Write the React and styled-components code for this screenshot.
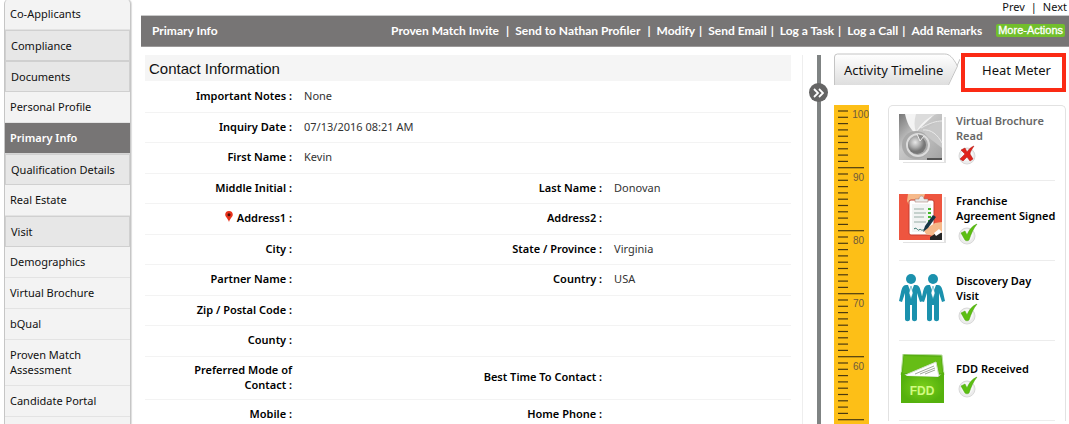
import React, { useState } from "react";
import styled, { createGlobalStyle, css } from "styled-components";

const menu = [
  { name: "Co-Applicants" },
  { name: "Compliance", shaded: true },
  { name: "Documents", shaded: true },
  { name: "Personal Profile" },
  { name: "Primary Info" },
  { name: "Qualification Details", shaded: true },
  { name: "Real Estate" },
  { name: "Visit", shaded: true },
  { name: "Demographics" },
  { name: "Virtual Brochure" },
  { name: "bQual" },
  { name: "Proven Match Assessment" },
  { name: "Candidate Portal" },
];

const actions = [
  { name: "Proven Match Invite", wide: true },
  { name: "Send to Nathan Profiler", wide: true },
  { name: "Modify" },
  { name: "Send Email" },
  { name: "Log a Task" },
  { name: "Log a Call" },
  { name: "Add Remarks" },
];

const rows = [
  [["Important Notes", "None"]],
  [["Inquiry Date", "07/13/2016 08:21 AM"]],
  [["First Name", "Kevin"]],
  [["Middle Initial", ""], ["Last Name", "Donovan"]],
  [["Address1", ""], ["Address2", ""]],
  [["City", ""], ["State / Province", "Virginia"]],
  [["Partner Name", ""], ["Country", "USA"]],
  [["Zip / Postal Code", ""]],
  [["County", ""]],
  [["Preferred Mode of Contact", ""], ["Best Time To Contact", ""]],
  [["Mobile", ""], ["Home Phone", ""]],
];

function PinIcon() {
  return (
    <Pin width="8" height="11" viewBox="0 0 8 11" aria-hidden="true">
      <path d="M4 0a3.8 3.8 0 0 1 3.8 3.8C7.8 6 5 7.5 4 11 3 7.500.2 6 .2 3.800A3.800 3.800 0 0 1 4 0z" fill="#e8331c" />
      <circle cx="4" cy="3.700" r="1.500" fill="#4a0d08" />
    </Pin>
  );
}

function BrochureIcon() {
  return (
    <svg width="48" height="50" viewBox="0 0 48 50" aria-hidden="true">
      <defs>
        <linearGradient id="paper" x1="0" y1="0" x2="1" y2="1">
          <stop offset="0" stopColor="#777" />
          <stop offset="0.4" stopColor="#c9c9c9" />
          <stop offset="1" stopColor="#a2a2a2" />
        </linearGradient>
        <radialGradient id="ball" cx="0.4" cy="0.35">
          <stop offset="0" stopColor="#e8e8e8" />
          <stop offset="0.6" stopColor="#aaa" />
          <stop offset="1" stopColor="#777" />
        </radialGradient>
      </defs>
      <rect x="4" y="3" width="43" height="46" fill="#e2e2e2" />
      <rect width="45" height="48" fill="#fff" />
      <rect width="43" height="46" fill="url(#paper)" />
      <path d="M6 0c2 9 5 15 10 19L36 0z" fill="#f4f4f4" />
      <path d="M17 0c-2 7-2 13 0 18C22 9 29 3 38 0z" fill="#dcdcdc" />
      <path d="M43 6C34 9 27 14 25 20l18 14z" fill="#c8c8c8" />
      <path d="M24 16c8-1 15 5 19 13M22 14c9-5 15-7 21-7" fill="none" stroke="#e9e9e9" />
      <circle cx="17" cy="31" r="14" fill="#a9a9a9" />
      <circle cx="19" cy="31" r="11" fill="none" stroke="#dcdcdc" strokeWidth="2" />
      <circle cx="18" cy="31" r="9" fill="url(#ball)" />
      <path d="M18 20l3 7 4-5" fill="#8b8b8b" stroke="#eee" />
      <path d="M28 44h15v2H28z" fill="#555" />
    </svg>
  );
}

function AgreementIcon() {
  return (
    <svg width="48" height="50" viewBox="0 0 48 50" aria-hidden="true">
      <rect x="4" y="3" width="43" height="46" fill="#e2e2e2" />
      <rect width="45" height="48" fill="#fff" />
      <rect width="43" height="46" fill="#ee553f" />
      <path d="M9 0h17l-2 6-5 2-3 6-5-1-3-6z" fill="#f6b98a" />
      <rect x="10" y="6" width="25" height="35" rx="2" fill="#fff" stroke="#c63c2e" />
      <rect x="13" y="10" width="19" height="28" fill="#f2f4f4" />
      <path d="M16 8V5h4c0-4 5-4 5 0h4v3z" fill="#e9eaea" stroke="#9c6c62" strokeWidth="0.500" />
      <path d="M15 15h10M15 19h12M15 23h10M15 28h12" stroke="#b7c5c0" strokeWidth="1.500" />
      <path d="M29 15h3M29 19h3M29 23h3M29 27h3" stroke="#42b82b" strokeWidth="2" />
      <path d="M15 35c3-3 4 4 6 0 2 2 3 1 5 0" fill="none" stroke="#3c7972" />
      <path d="M43 28l-7 1-8 5-3 3 2 3 7 2 9 4z" fill="#f6b98a" />
      <path d="M24 38l2-6 8-11 3 2-8 11z" fill="#183746" />
      <path d="M31 43l8-5 4 1v7H31z" fill="#262626" />
      <path d="M35 39l5-4 3 3-6 4z" fill="#fff" />
    </svg>
  );
}

function Person({ x }) {
  return (
    <g transform={`translate(${x} 0)`}>
      <circle cx="12" cy="5" r="5" fill="#1b91ad" />
      <path
        d="M7 11h10c3 0 4 3 5 7l2 9-3 1-3-9v26c0 3-5 3-5 0V31h-2v14c0 3-5 3-5 0V19l-3 9-3-1 2-9c1-4 2-7 5-7z"
        fill="#1b91ad"
      />
      <path d="M9 11h6l-3 8z" fill="#fff" />
      <path d="M12 12l2 7-2 6-2-6z" fill="#fff" stroke="#1b91ad" strokeWidth="0.500" />
    </g>
  );
}

function VisitIcon() {
  return (
    <svg width="48" height="50" viewBox="0 0 48 50" aria-hidden="true">
      <Person x={0} />
      <Person x={22} />
    </svg>
  );
}

function FddIcon() {
  return (
    <svg width="48" height="50" viewBox="0 0 48 50" aria-hidden="true">
      <defs>
        <radialGradient id="envelope">
          <stop offset="0" stopColor="#7cd01b" />
          <stop offset="1" stopColor="#55b10d" />
        </radialGradient>
      </defs>
      <path d="M4 0l39 1 2 20H2z" fill="#58ae12" stroke="#b9dca0" />
      <path d="M5 2l37 1 1 16H4z" fill="#66bd16" />
      <path d="M4 22L37 8l3 15z" fill="#fff" stroke="#d6dfd0" />
      <path d="M16 20l19-8M21 20l15-6M26 20l10-4" stroke="#9fa79a" />
      <path d="M2 18l6 4 31 1 6-5v31H2z" fill="url(#envelope)" />
      <text
        x="23"
        y="41"
        textAnchor="middle"
        fontFamily="Liberation Sans, sans-serif"
        fontWeight="bold"
        fontSize="12"
        fill="#d2fa83"
      >
        FDD
      </text>
    </svg>
  );
}

function StatusIcon({ done }) {
  return (
    <Status width="20" height="22" viewBox="0 0 20 22" role="img" aria-label={done ? "Done" : "Not done"}>
      <circle cx="9" cy="13" r="8" fill="#ececec" stroke="#d9d9d9" />
      <circle cx="9" cy="12" r="6" fill="#f7f7f7" />
      {done ? (
        <path d="M3 10l4-2 2 4C11 7 14 3 19 1c-4 5-6 10-8 16-1 1-3 1-4 0z" fill="#5cbf12" stroke="#48a20c" strokeWidth="0.500" />
      ) : (
        <path d="M3 7l4-2 2 4c2-3 4-5 7-6-2 3-4 6-4 8l3 5-3 2-3-4-4 4-3-2 5-5z" fill="#e0231a" stroke="#ad130e" strokeWidth="0.500" />
      )}
    </Status>
  );
}

function Ruler() {
  const ticks = Array.from({ length: 50 }, (_, i) => i);
  return (
    <RulerStyle width="35" height="320" viewBox="0 0 35 320" role="img" aria-label="Heat meter">
      <rect width="35" height="320" fill="#fdbf17" />
      {ticks.map((i) => {
        const y = 6 + i * 6.3;
        return (
          <line key={i} x1="4" x2={i % 10 === 9 ? 30 : 14} y1={y} y2={y} stroke="#4b3a10" strokeWidth="1.200" />
        );
      })}
      {[100, 90, 80, 70, 60].map((n, i) => (
        <text key={n} x={n === 100 ? 35 : 30} y={13 + i * 63} textAnchor="end">
          {n}
        </text>
      ))}
    </RulerStyle>
  );
}

const steps = [
  { name: "Virtual Brochure\nRead", icon: <BrochureIcon />, done: false },
  { name: "Franchise\nAgreement Signed", icon: <AgreementIcon />, done: true },
  { name: "Discovery Day\nVisit", icon: <VisitIcon />, done: true },
  { name: "FDD Received", icon: <FddIcon />, done: true },
];

function App() {
  const [page, setPage] = useState("Primary Info");

  return (
    <Page>
      <GlobalStyle />
      <Sidebar>
        {menu.map((item) => (
          <MenuItem
            key={item.name}
            href="#"
            $shaded={item.shaded}
            $active={page === item.name}
            onClick={() => setPage(item.name)}
          >
            {item.name}
          </MenuItem>
        ))}
      </Sidebar>
      <Main>
        <Pager>
          <a href="#">Prev</a>
          <span>|</span>
          <a href="#">Next</a>
        </Pager>
        <Header>
          <h1>Primary Info</h1>
          <Actions>
            {actions.map((item, i) => (
              <React.Fragment key={item.name}>
                <a href="#">{item.name}</a>
                {i < actions.length - 1 && <Bar $wide={item.wide}>|</Bar>}
              </React.Fragment>
            ))}
            <MoreButton type="button">More-Actions</MoreButton>
          </Actions>
        </Header>
        <Content>
          <Contact>
            <h2>Contact Information</h2>
            <InfoTable>
              <colgroup>
                <col />
                <col />
                <col />
                <col />
              </colgroup>
              <tbody>
                {rows.map((row) => (
                  <tr key={row[0][0]}>
                    {row.map(([label, value]) => (
                      <React.Fragment key={label}>
                        <th scope="row">
                          {label === "Address1" && <PinIcon />}
                          {`${label} :`}
                        </th>
                        <td>{value}</td>
                      </React.Fragment>
                    ))}
                    {row.length === 1 && <td colSpan={2} />}
                  </tr>
                ))}
              </tbody>
            </InfoTable>
          </Contact>
          <Divider>
            <Knob type="button" aria-label="Collapse panel">
              <svg width="11" height="10" viewBox="0 0 11 10">
                <path d="M1 1l4 4-4 4M6 1l4 4-4 4" fill="none" stroke="#fff" strokeWidth="1.800" />
              </svg>
            </Knob>
          </Divider>
          <Panel>
            <Tabs>
              <TimelineTab type="button">
                <svg width="126" height="34" viewBox="0 0 126 34" aria-hidden="true">
                  <defs>
                    <linearGradient id="tab" x1="0" y1="0" x2="0" y2="1">
                      <stop offset="0" stopColor="#fff" />
                      <stop offset="1" stopColor="#dedede" />
                    </linearGradient>
                  </defs>
                  <path d="M0 32V4q0-3 3-3h107c5 0 8 3 13 12l-9 19z" fill="url(#tab)" />
                  <path d="M0.500 32V4q0-3 3-3h107c5 0 8 3 13 12l-9 19M123 13l3-7" fill="none" stroke="#c4c4c4" />
                </svg>
                <span>Activity Timeline</span>
              </TimelineTab>
              <HeatTab type="button">Heat Meter</HeatTab>
            </Tabs>
            <Meter>
              <Ruler />
              <Steps>
                {steps.map((step) => (
                  <Step key={step.name} $muted={!step.done}>
                    {step.icon}
                    <div>
                      <h3>{step.name}</h3>
                      <StatusIcon done={step.done} />
                    </div>
                  </Step>
                ))}
              </Steps>
            </Meter>
          </Panel>
        </Content>
      </Main>
    </Page>
  );
}

const GlobalStyle = createGlobalStyle`
  * {
    box-sizing: border-box;
  }
  body {
    margin: 0;
    background: #fff;
    color: #111;
    font-family: "Noto Sans", "Open Sans", sans-serif;
    font-size: 11px;
    line-height: 15px;
  }
  h1, h2, h3 {
    margin: 0;
    font-size: inherit;
  }
  a {
    color: inherit;
    text-decoration: none;
  }
  button {
    border: 0;
    padding: 0;
    color: inherit;
    font: inherit;
    cursor: pointer;
  }
  svg {
    flex-shrink: 0;
  }
`;

const Page = styled.div`
  display: flex;
  gap: 10px;
  height: 100vh;
  padding-left: 4px;
  overflow: hidden;
`;

const Sidebar = styled.nav`
  flex: 0 0 127px;
  margin-top: -1px;
  border: 1px solid #c6c6c6;
  border-top: 0;
  border-bottom: 0;
  border-radius: 5px 5px 0 0;
  background: #f3f3f3;
  box-shadow: 1px 0 1px #ddd;
`;

const MenuItem = styled.a`
  display: block;
  padding: 7px 5px 8px;
  border-bottom: 1px solid #e3e3e3;
  ${(p) =>
    p.$shaded &&
    css`
      padding: 7px 5px 7px;
      border: 1px solid #d0d0d0;
      background: #e7e7e7;
    `}
  ${(p) =>
    p.$active &&
    css`
      border-color: #d5d5d5;
      background: #777575;
      color: #fff;
      font-weight: 600;
    `}
`;

const Main = styled.main`
  display: flex;
  flex: 1;
  flex-direction: column;
  min-width: 0;
`;

const Pager = styled.div`
  display: flex;
  flex-shrink: 0;
  justify-content: flex-end;
  gap: 6px;
  padding-right: 2px;
  line-height: 14px;
`;

const Header = styled.header`
  display: flex;
  flex-shrink: 0;
  align-items: center;
  justify-content: space-between;
  height: 32px;
  margin-top: 1px;
  padding: 0 4px 2px 11px;
  border-top: 1px solid #c9c9c9;
  border-bottom: 1px solid #9b9999;
  background: #777575;
  color: #fff;
  font-family: Lato, sans-serif;
  font-size: 12px;
  font-weight: 700;
`;

const Actions = styled.div`
  display: flex;
  align-items: center;
  white-space: nowrap;
`;

const Bar = styled.span`
  margin: 0 6px 0 ${(p) => (p.$wide ? "7px" : "4px")};
`;

const MoreButton = styled.button`
  margin-left: 14px;
  padding: 0 2px;
  border-radius: 2px;
  background: #72bf2c;
  font-family: "Liberation Sans", sans-serif;
  font-size: 11px;
  font-weight: 400;
  line-height: 13px;
  -webkit-text-stroke: 0.3px #fff;
`;

const Content = styled.div`
  display: flex;
  flex: 1;
  padding: 8px 3px 0 4px;
`;

const Contact = styled.section`
  flex: 1;
  h2 {
    padding: 2px 4px 0;
    background: #f5f5f5;
    font-family: "Liberation Sans", sans-serif;
    font-size: 15px;
    font-weight: 400;
    line-height: 24px;
  }
`;

const InfoTable = styled.table`
  width: 100%;
  border-collapse: collapse;
  table-layout: fixed;
  col {
    width: 24%;
  }
  col:last-child {
    width: 28%;
  }
  tr {
    height: 31px;
    border-bottom: 1px solid #f3f3f3;
  }
  tr:nth-child(even) {
    height: 30px;
  }
  th,
  td {
    padding: 5px 4px 7px;
  }
  th {
    padding-right: 8px;
    padding-left: 20px;
    color: #000;
    font-weight: 600;
    text-align: right;
  }
  td {
    color: #333;
  }
`;

const Pin = styled.svg`
  margin-right: 4px;
`;

const Divider = styled.div`
  display: flex;
  justify-content: center;
  width: 32px;
  margin-left: 11px;
  border-left: 1px solid #eee;
  background: linear-gradient(#7f8383, #7f8383) center / 4px 100% no-repeat;
`;

const Knob = styled.button`
  display: flex;
  align-items: center;
  justify-content: center;
  width: 19px;
  height: 19px;
  margin-top: 28px;
  border-radius: 50%;
  background: #656565;
`;

const Panel = styled.aside`
  flex: 0 0 232px;
`;

const Tabs = styled.div`
  display: flex;
  align-items: flex-start;
  gap: 1px;
  height: 51px;
  margin-top: -2px;
  margin-bottom: 1px;
  font-size: 13px;
`;

const TimelineTab = styled.button`
  display: grid;
  align-items: center;
  background: none;
  svg,
  span {
    grid-area: 1 / 1;
  }
  span {
    padding: 0 14px 0 10px;
    text-align: left;
    white-space: nowrap;
  }
`;

const HeatTab = styled.button`
  flex: 1;
  height: 39px;
  padding: 0 0 4px 6px;
  border: 4px solid #fb2a14;
  background: #fff;
  white-space: nowrap;
`;

const Meter = styled.div`
  display: flex;
  align-items: flex-start;
  gap: 19px;
`;

const RulerStyle = styled.svg`
  text {
    fill: #6e5a3c;
    font-family: "Liberation Sans Narrow", "Liberation Sans", sans-serif;
    font-size: 10px;
  }
`;

const Steps = styled.div`
  flex: 1;
  padding: 0 10px;
  border: 1px solid #e2e2e2;
  border-bottom: 0;
  border-radius: 5px 5px 0 0;
`;

const Step = styled.article`
  display: flex;
  align-items: center;
  gap: 9px;
  min-height: 80px;
  padding: 12px 0 15px;
  border-bottom: 1px solid #ececec;
  color: ${(p) => (p.$muted ? "#666" : "#000")};
  &:first-child {
    min-height: 75px;
    padding-top: 7px;
  }
  div {
    flex: 1;
    margin-right: -8px;
  }
  h3 {
    font-weight: 600;
    white-space: pre-line;
  }
`;

const Status = styled.svg`
  display: block;
  margin-left: 2px;
`;

export default App;
